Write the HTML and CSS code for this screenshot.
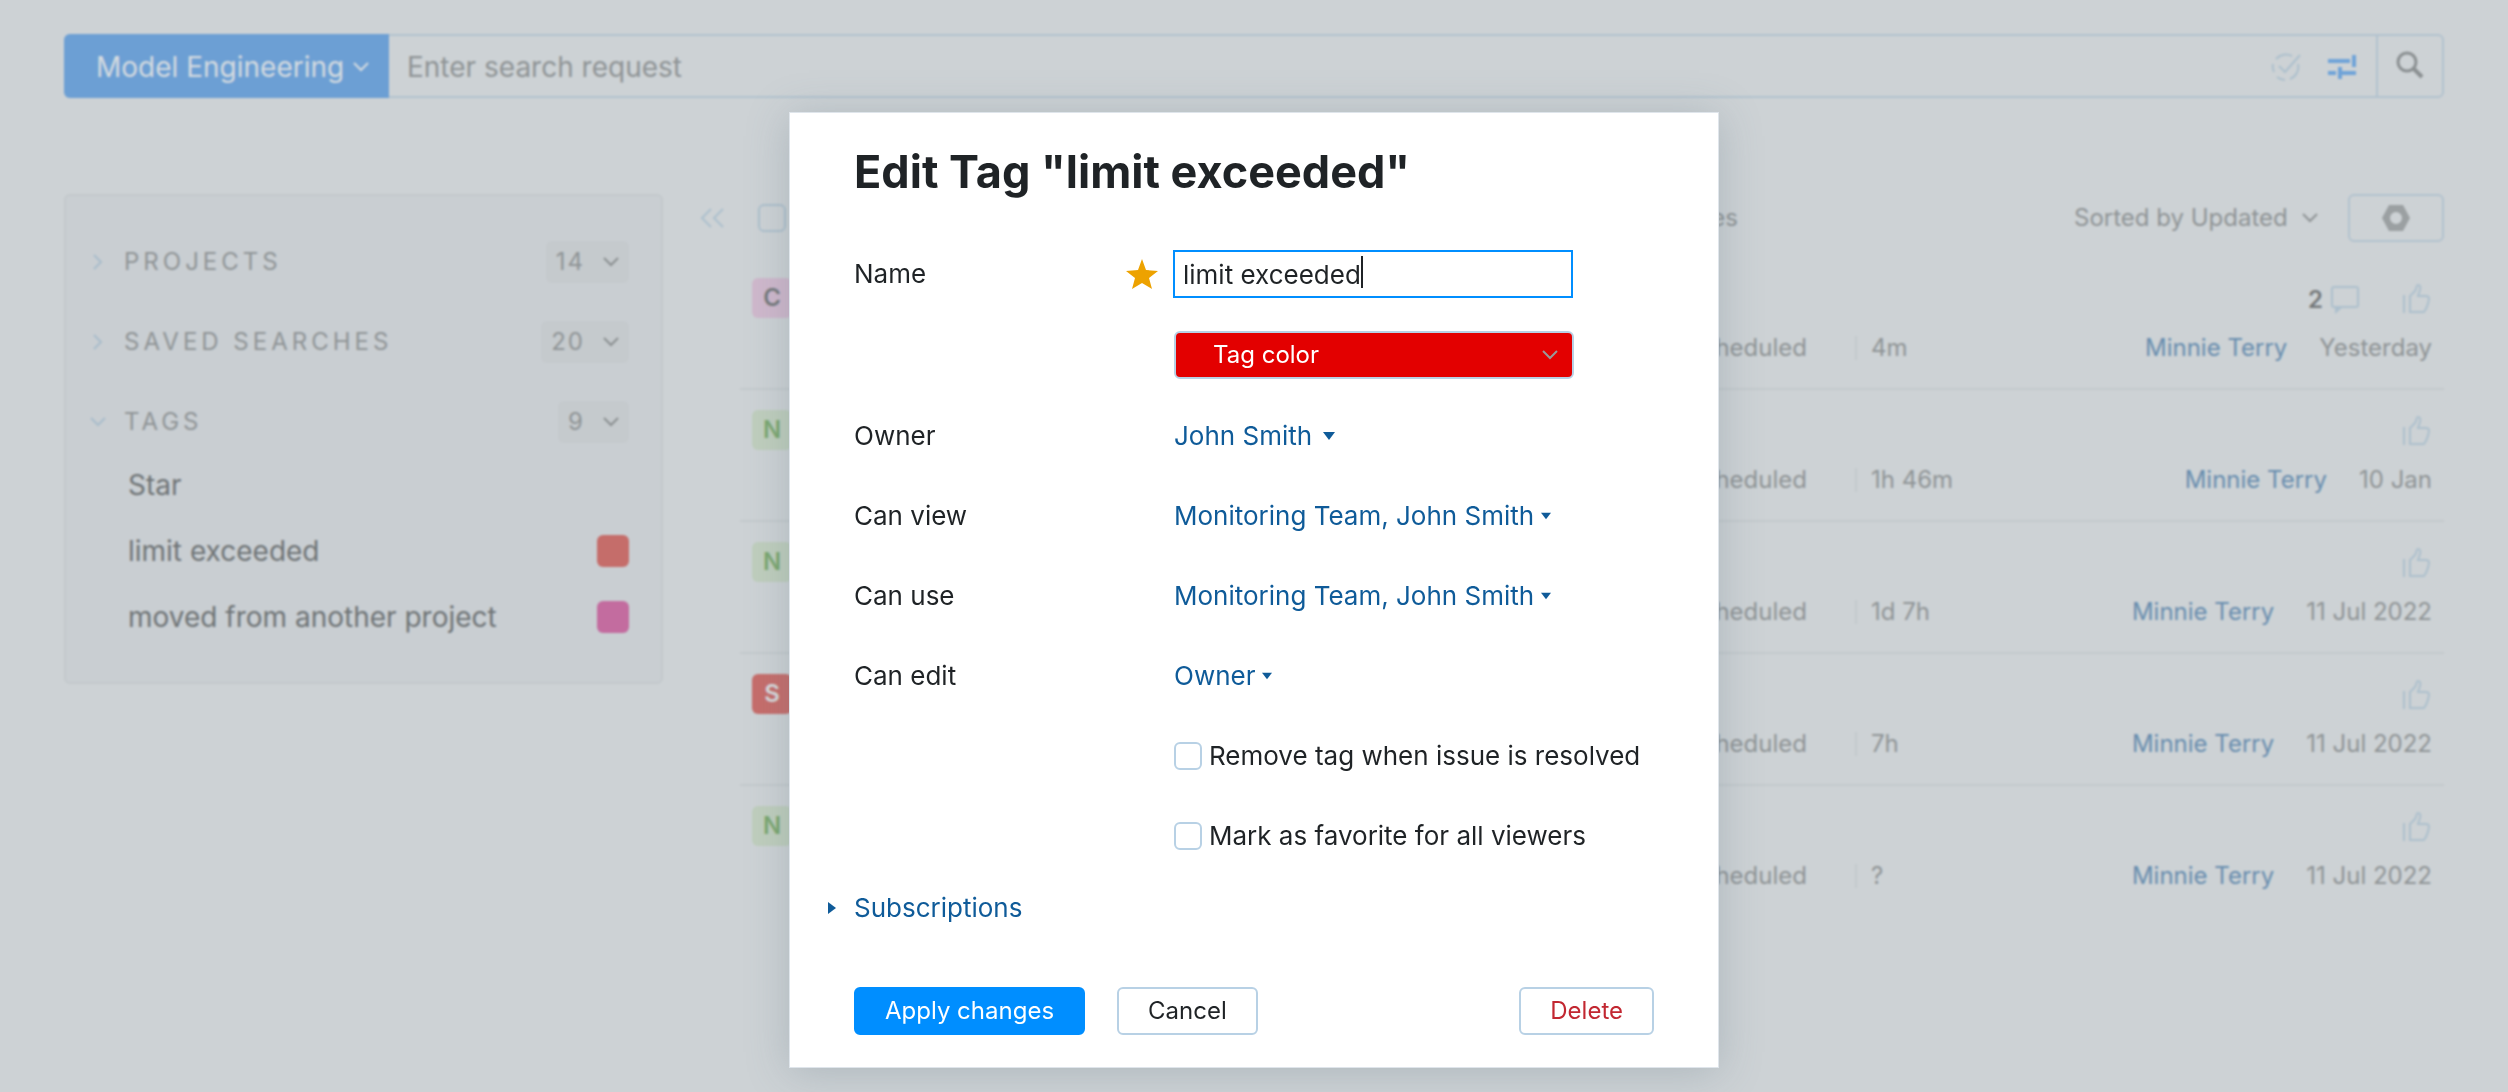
FILE: index.html
```html
<!DOCTYPE html>
<html lang="en">
<head>
    <meta charset="UTF-8">
    <meta name="viewport" content="width=device-width, initial-scale=1.0">
    <title>Edit Tag</title>
    <link rel="stylesheet" href="styles.css">
</head>
<body>
    <!-- Shared icons -->
    <svg class="sprite" aria-hidden="true">
        <symbol id="chevron" viewBox="0 0 16 10"><path d="M1 1l7 7 7-7" fill="none" stroke="currentColor" stroke-width="2"/></symbol>
        <symbol id="thumb" viewBox="0 0 28 30"><path d="M2 12v18M8 13l5-5c2-3 1-6 3-6s3 2 2 5l-2 6h8c2 0 3 1 3 3-1 6-2 9-5 13H8z" fill="none" stroke="currentColor" stroke-width="2"/></symbol>
        <symbol id="triangle" viewBox="0 0 12 8"><path d="M0 0h12L6 8z" fill="currentColor"/></symbol>
    </svg>

    <div class="page">
        <header class="search-bar">
            <div class="context">
                <select aria-label="Context">
                    <option>Model Engineering</option>
                </select>
                <svg class="chevron"><use href="#chevron"/></svg>
            </div>
            <input class="search-input" type="text" placeholder="Enter search request" aria-label="Search request">
            <button class="icon-button" aria-label="Resolved issues">
                <svg width="30" height="28" viewBox="0 0 30 28" fill="none" stroke="currentColor" stroke-width="2">
                    <path d="M5 6a13 13 0 0 1 16-3M2 11a13 13 0 0 0 1 8M6 24a13 13 0 0 0 8 3M19 26a13 13 0 0 0 8-15M8 13l6 6L29 2"/>
                </svg>
            </button>
            <button class="icon-button active" aria-label="Filters">
                <svg width="28" height="24" viewBox="0 0 28 24" fill="none" stroke="currentColor" stroke-width="4">
                    <path d="M0 6h22M26 0v12M0 18h8M12 12v12M14 18h14"/>
                </svg>
            </button>
            <button class="search-button" aria-label="Search">
                <svg width="28" height="28" viewBox="0 0 28 28" fill="none" stroke="currentColor">
                    <circle cx="11" cy="11" r="9" stroke-width="3"/>
                    <path d="M17 17l9 9" stroke-width="4"/>
                </svg>
            </button>
        </header>

        <div class="content">
            <nav class="sidebar">
                <div class="section">
                    <svg class="chevron right"><use href="#chevron"/></svg>
                    <span class="section-title">PROJECTS</span>
                    <button class="count">14<svg class="chevron"><use href="#chevron"/></svg></button>
                </div>
                <div class="section">
                    <svg class="chevron right"><use href="#chevron"/></svg>
                    <span class="section-title">SAVED SEARCHES</span>
                    <button class="count">20<svg class="chevron"><use href="#chevron"/></svg></button>
                </div>
                <div class="section">
                    <svg class="chevron"><use href="#chevron"/></svg>
                    <span class="section-title">TAGS</span>
                    <button class="count">9<svg class="chevron"><use href="#chevron"/></svg></button>
                </div>
                <a class="tag" href="#">Star</a>
                <a class="tag" href="#">limit exceeded<span class="swatch red"></span></a>
                <a class="tag" href="#">moved from another project<span class="swatch pink"></span></a>
            </nav>

            <button class="collapse" aria-label="Collapse sidebar">
                <svg width="24" height="20" viewBox="0 0 24 20" fill="none" stroke="currentColor" stroke-width="2">
                    <path d="M11 1L2 10l9 9M23 1l-9 9 9 9"/>
                </svg>
            </button>

            <main class="issues">
                <div class="toolbar">
                    <input class="checkbox" type="checkbox" aria-label="Select all">
                    <span class="found">issues</span>
                    <div class="toolbar-right">
                        <div class="sort">
                            <select aria-label="Sort order">
                                <option>Sorted by Updated</option>
                            </select>
                            <svg class="chevron"><use href="#chevron"/></svg>
                        </div>
                        <button class="settings" aria-label="Settings">
                            <svg width="28" height="26" viewBox="0 0 28 26"><path d="M7 0h14l7 13-7 13H7L0 13zM14 7a6 6 0 1 0 0 12 6 6 0 0 0 0-12z" fill="currentColor" fill-rule="evenodd"/></svg>
                        </button>
                    </div>
                </div>

                <div class="issue">
                    <span class="badge critical">C</span>
                    <div class="reactions">
                        <strong>2</strong>
                        <svg class="comment" width="28" height="28" viewBox="0 0 28 28"><path d="M3 1h22a2 2 0 0 1 2 2v16a2 2 0 0 1-2 2H3a2 2 0 0 1-2-2V3a2 2 0 0 1 2-2z" fill="none" stroke="currentColor" stroke-width="2"/><path d="M4 21h8l-8 7z" fill="currentColor"/></svg>
                        <svg class="thumb"><use href="#thumb"/></svg>
                    </div>
                    <span class="state">Scheduled</span>
                    <div class="details">
                        <span class="estimate">4m</span>
                        <a href="#">Minnie Terry</a>
                        <span>Yesterday</span>
                    </div>
                </div>
                <div class="issue">
                    <span class="badge normal">N</span>
                    <div class="reactions"><svg class="thumb"><use href="#thumb"/></svg></div>
                    <span class="state">Scheduled</span>
                    <div class="details">
                        <span class="estimate">1h 46m</span>
                        <a href="#">Minnie Terry</a>
                        <span>10 Jan</span>
                    </div>
                </div>
                <div class="issue">
                    <span class="badge normal">N</span>
                    <div class="reactions"><svg class="thumb"><use href="#thumb"/></svg></div>
                    <span class="state">Scheduled</span>
                    <div class="details">
                        <span class="estimate">1d 7h</span>
                        <a href="#">Minnie Terry</a>
                        <span>11 Jul 2022</span>
                    </div>
                </div>
                <div class="issue">
                    <span class="badge stopper">S</span>
                    <div class="reactions"><svg class="thumb"><use href="#thumb"/></svg></div>
                    <span class="state">Scheduled</span>
                    <div class="details">
                        <span class="estimate">7h</span>
                        <a href="#">Minnie Terry</a>
                        <span>11 Jul 2022</span>
                    </div>
                </div>
                <div class="issue">
                    <span class="badge normal">N</span>
                    <div class="reactions"><svg class="thumb"><use href="#thumb"/></svg></div>
                    <span class="state">Scheduled</span>
                    <div class="details">
                        <span class="estimate">?</span>
                        <a href="#">Minnie Terry</a>
                        <span>11 Jul 2022</span>
                    </div>
                </div>
            </main>
        </div>
    </div>

    <div class="overlay">
        <form class="dialog" role="dialog" aria-labelledby="dialogTitle">
            <h1 id="dialogTitle">Edit Tag "limit exceeded"</h1>

            <div class="form-row">
                <label for="name">Name</label>
                <div class="name-field">
                    <svg class="star" width="32" height="30" viewBox="0 0 32 30"><path d="M16 0l4 11 12 1-9 7 3 11-10-6-10 6 3-11-9-7 12-1z" fill="currentColor"/></svg>
                    <input type="text" id="name" value="limit exceeded">
                    <span class="caret"></span>
                </div>
            </div>
            <div class="form-row color-row">
                <div class="color-field">
                    <select id="color" aria-label="Tag color">
                        <option>Tag color</option>
                    </select>
                    <svg class="chevron"><use href="#chevron"/></svg>
                </div>
            </div>
            <div class="form-row">
                <label for="owner">Owner</label>
                <div class="link-select large">
                    <select id="owner"><option>John Smith</option></select>
                    <svg><use href="#triangle"/></svg>
                </div>
            </div>
            <div class="form-row">
                <label for="view">Can view</label>
                <div class="link-select">
                    <select id="view"><option>Monitoring Team, John Smith</option></select>
                    <svg><use href="#triangle"/></svg>
                </div>
            </div>
            <div class="form-row">
                <label for="use">Can use</label>
                <div class="link-select">
                    <select id="use"><option>Monitoring Team, John Smith</option></select>
                    <svg><use href="#triangle"/></svg>
                </div>
            </div>
            <div class="form-row">
                <label for="edit">Can edit</label>
                <div class="link-select">
                    <select id="edit"><option>Owner</option></select>
                    <svg><use href="#triangle"/></svg>
                </div>
            </div>
            <div class="form-row">
                <div class="check-field">
                    <input class="checkbox" type="checkbox" id="remove">
                    <label for="remove">Remove tag when issue is resolved</label>
                </div>
            </div>
            <div class="form-row">
                <div class="check-field">
                    <input class="checkbox" type="checkbox" id="favorite">
                    <label for="favorite">Mark as favorite for all viewers</label>
                </div>
            </div>

            <a class="subscriptions" href="#">
                <svg width="8" height="12" viewBox="0 0 8 12"><path d="M0 0l8 6-8 6z" fill="currentColor"/></svg>
                Subscriptions
            </a>

            <div class="buttons">
                <button class="primary" type="submit">Apply changes</button>
                <button type="button">Cancel</button>
                <button class="delete" type="button">Delete</button>
            </div>
        </form>
    </div>
</body>
</html>
```
FILE: styles.css
```css
* {
    box-sizing: border-box;
}
body {
    margin: 0;
    min-height: 100vh;
    background-color: #cdd2d5;
    color: #1f2326;
    font-family: Inter, "Liberation Sans", sans-serif;
    font-size: 26px;
    line-height: 32px;
}
button,
input,
select {
    margin: 0;
    padding: 0;
    border: none;
    background: none;
    color: inherit;
    font: inherit;
}
select {
    appearance: none;
    outline: none;
}
button,
select {
    cursor: pointer;
}
a {
    text-decoration: none;
}
svg {
    flex-shrink: 0;
}
.sprite {
    display: none;
}
.chevron {
    width: 16px;
    height: 10px;
}
.chevron.right {
    transform: rotate(-90deg);
}
.checkbox {
    appearance: none;
    width: 28px;
    height: 28px;
    border: 2px solid #b8d1e5;
    border-radius: 6px;
}

/* Page behind the dialog */
.page {
    padding: 34px 64px;
    color: #8f9496;
    font-size: 24px;
}
.search-bar {
    display: flex;
    align-items: stretch;
    height: 64px;
    margin-bottom: 96px;
    border: 2px solid #b2c2ce;
    border-radius: 6px;
    font-size: 28px;
}
.context {
    display: flex;
    align-items: center;
    gap: 8px;
    margin: -2px 0 -2px -2px;
    padding: 2px 20px 0 32px;
    border-radius: 6px 0 0 6px;
    background-color: #6c9fd4;
    color: #d5dbe0;
}
.search-input {
    flex: 1;
    min-width: 0;
    padding: 2px 18px 0;
}
.search-input::placeholder {
    color: #8f9496;
    opacity: 1;
}
.icon-button {
    display: flex;
    align-items: center;
    justify-content: center;
    width: 56px;
    padding-top: 2px;
    color: #adc0cd;
}
.icon-button.active {
    margin-right: 6px;
    color: #6fa3d8;
}
.search-button {
    width: 66px;
    padding-bottom: 2px;
    border-left: 2px solid #b2c2ce;
    color: #8b9092;
}
.search-button svg {
    display: block;
    margin: 0 auto;
}
.content {
    display: grid;
    grid-template-columns: 599px 77px 1fr;
    align-items: start;
}
.sidebar {
    padding: 26px 32px 30px 24px;
    border: 2px solid #c3c9cc;
    border-radius: 6px;
    background-color: #c9ced2;
}
.section {
    display: flex;
    align-items: center;
    height: 80px;
    color: #a9bdcb;
}
.section-title {
    flex: 1;
    margin-left: 18px;
    color: #8f9496;
    letter-spacing: 4px;
}
.count {
    display: flex;
    align-items: center;
    gap: 18px;
    height: 42px;
    padding: 0 10px;
    border-radius: 6px;
    background-color: #c5cacd;
    color: #8f9496;
    letter-spacing: 2px;
}
.count .chevron {
    color: #8b9092;
}
.tag {
    display: flex;
    align-items: center;
    justify-content: space-between;
    height: 66px;
    padding-left: 38px;
    color: #6f7476;
    font-size: 28px;
}
.section + .tag {
    margin-top: -10px;
}
.tag:last-child {
    margin-bottom: 2px;
}
.swatch {
    width: 32px;
    height: 32px;
    border-radius: 6px;
}
.swatch.red {
    background-color: #c56d6a;
}
.swatch.pink {
    background-color: #c36c9f;
}
.collapse {
    display: flex;
    align-items: center;
    justify-content: center;
    width: 98px;
    height: 48px;
    color: #adc0cd;
}
.toolbar {
    display: flex;
    align-items: center;
    height: 48px;
    margin-bottom: 16px;
    padding-left: 18px;
}
.toolbar .checkbox {
    border-color: #adc0cd;
}
.found {
    flex: 1;
    text-align: right;
}
.toolbar-right {
    display: flex;
    justify-content: flex-end;
    gap: 30px;
    width: 706px;
}
.sort {
    display: flex;
    align-items: center;
    gap: 14px;
}
.settings {
    display: flex;
    align-items: center;
    justify-content: center;
    width: 96px;
    height: 48px;
    border: 2px solid #b2c2ce;
    border-radius: 6px;
    color: #9ba0a2;
}
.issue {
    display: grid;
    grid-template-columns: 40px 1fr 577px;
    grid-template-rows: 40px 40px;
    row-gap: 10px;
    align-items: center;
    height: 132px;
    padding: 20px 12px 0;
    border-bottom: 2px solid #c3c9cc;
}
.issue:last-child {
    border-bottom: none;
}
.badge {
    height: 40px;
    border-radius: 6px;
    font-weight: 600;
    line-height: 40px;
    text-align: center;
}
.badge.critical {
    background-color: #cfb8cc;
    color: #75797b;
}
.badge.normal {
    background-color: #bfcebd;
    color: #7ba770;
}
.badge.stopper {
    background-color: #c66d6b;
    color: #d8dcde;
}
.reactions {
    grid-column: 3;
    display: flex;
    align-items: center;
    justify-content: flex-end;
    padding-right: 2px;
    color: #adc0cd;
}
.reactions strong {
    padding-top: 4px;
    color: #75797b;
    font-weight: 600;
}
.comment {
    margin: 4px 43px 0 8px;
}
.thumb {
    width: 28px;
    height: 30px;
}
.state {
    grid-column: 2;
    margin-right: 48px;
    text-align: right;
}
.details {
    display: flex;
    align-items: center;
    gap: 32px;
}
.estimate {
    flex: 1;
    padding-left: 14px;
    border-left: 2px solid #c3c9cc;
    line-height: 24px;
}
.details a {
    color: #688dae;
}

/* Dialog */
.overlay {
    position: fixed;
    inset: 0;
    display: flex;
    align-items: flex-start;
    justify-content: center;
    padding-top: 112px;
    backdrop-filter: blur(1px);
    overflow: auto;
}
.dialog {
    width: 930px;
    padding: 31px 64px 32px;
    border: 1px solid #dfe5eb;
    background-color: #fff;
    box-shadow: 0 4px 40px rgba(90, 110, 125, 0.28);
}
.dialog h1 {
    margin: 0 0 34px;
    font-size: 45px;
    font-weight: 700;
    line-height: 56px;
}
.form-row {
    display: grid;
    grid-template-columns: 320px 1fr;
    align-items: center;
    height: 80px;
}
.form-row > div {
    grid-column: 2;
}
.color-row {
    height: 82px;
}
.name-field {
    position: relative;
    display: flex;
    align-items: center;
    margin-left: -48px;
}
.star {
    margin-right: 15px;
    color: #eda200;
}
.name-field input {
    width: 400px;
    height: 48px;
    padding: 0 8px;
    border: 2px solid #008eff;
    outline: none;
}
.caret {
    position: absolute;
    top: 6px;
    left: 235px;
    width: 2px;
    height: 32px;
    background-color: #1f2326;
}
.color-field {
    display: flex;
    align-items: center;
    width: 400px;
    height: 48px;
    padding-right: 14px;
    border: 2px solid #b8d1e5;
    border-radius: 6px;
    background-color: #e30000;
    color: #999;
    font-size: 24px;
}
.color-field select {
    flex: 1;
    padding-left: 37px;
    color: #fff;
}
.link-select {
    display: flex;
    align-items: center;
    gap: 6px;
    color: #0f5b99;
}
.link-select svg {
    width: 10px;
    height: 8px;
}
.link-select.large {
    gap: 10px;
}
.link-select.large svg {
    width: 12px;
    height: 8px;
}
.check-field {
    display: flex;
    align-items: center;
    gap: 7px;
}
.subscriptions {
    display: flex;
    align-items: center;
    gap: 18px;
    height: 64px;
    margin-left: -26px;
    color: #0f5b99;
}
.buttons {
    display: flex;
    gap: 32px;
    margin-top: 47px;
}
.buttons button {
    height: 48px;
    padding: 0 29px;
    border: 2px solid #b8d1e5;
    border-radius: 6px;
    font-size: 24px;
}
.buttons .primary {
    border-color: #008eff;
    background-color: #008eff;
    color: #fff;
}
.buttons .delete {
    margin-left: auto;
    color: #c22731;
}
```
